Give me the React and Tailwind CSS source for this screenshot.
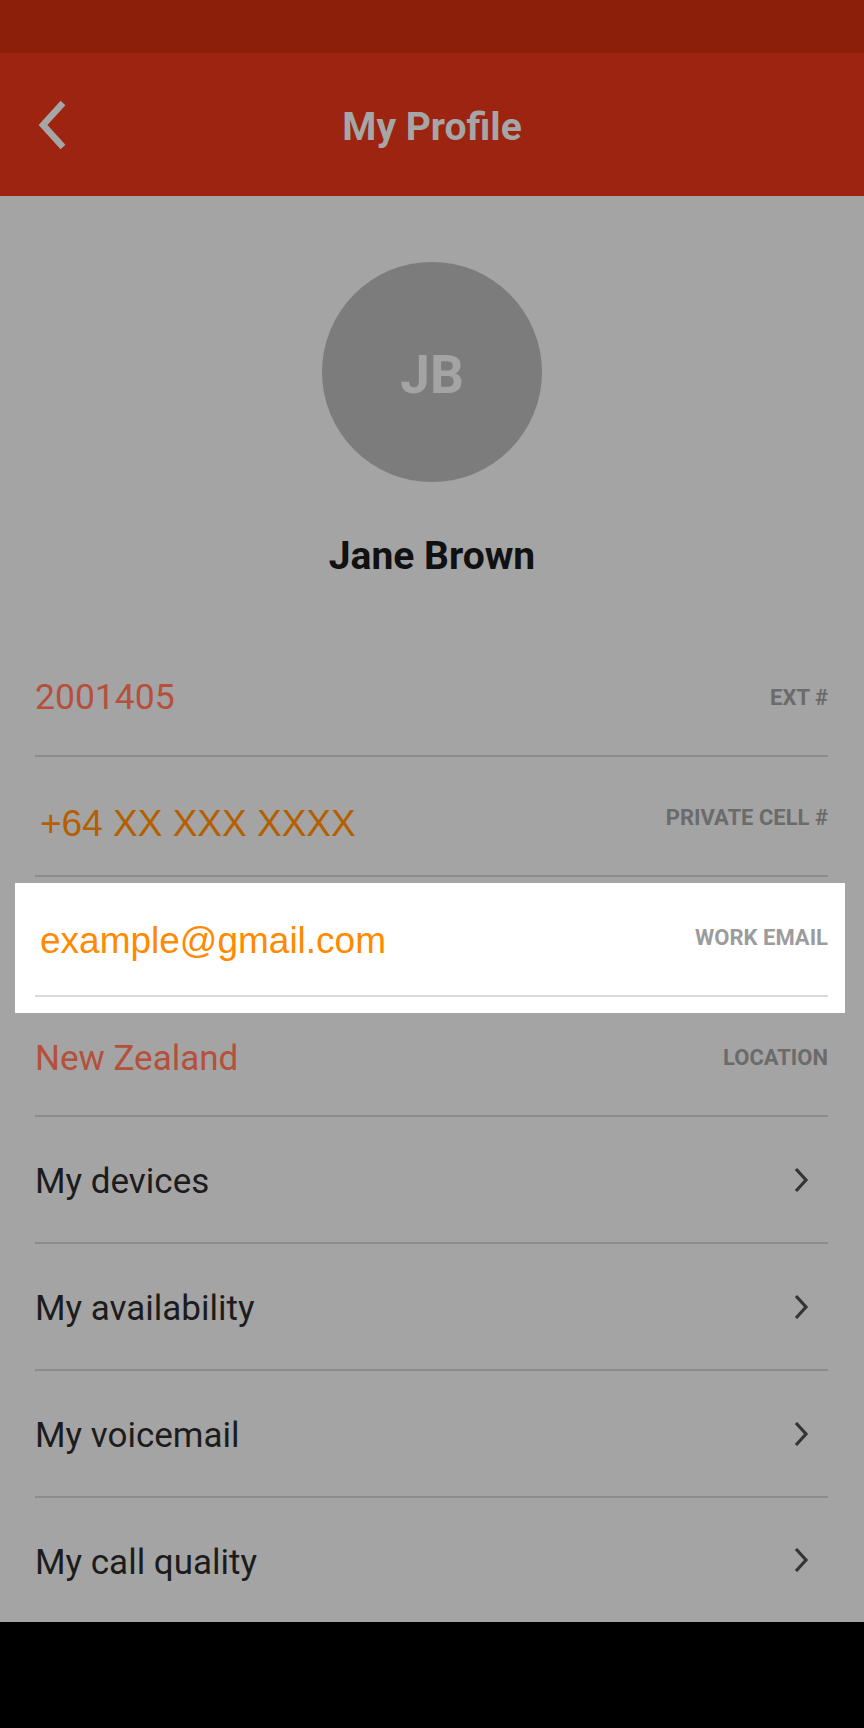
import React from "react";

function Chevron() {
  return (
    <svg width="20" height="30" viewBox="0 0 20 30" className="mr-[17px] shrink-0">
      <polyline points="5,4 15,15 5,26" fill="none" stroke="#343434" strokeWidth="3.2" strokeLinejoin="miter" />
    </svg>
  );
}

function InfoRow({ value, label, valueClass, labelClass = "text-[#6b6b6b]" }) {
  return (
    <div className="flex h-[120px] items-center justify-between border-b-2 border-[#8c8c8c]">
      <span className={valueClass}>{value}</span>
      <span className={"pt-[4px] font-[Roboto,sans-serif] text-[22px] font-bold leading-none " + labelClass}>{label}</span>
    </div>
  );
}

function MenuRow({ label, last }) {
  return (
    <div
      className={
        "flex items-center justify-between " +
        (last ? "h-[124px]" : "h-[127px] border-b-2 border-[#8c8c8c]")
      }
    >
      <span className="pt-[4px] font-[Roboto,sans-serif] text-[35px] leading-none text-[#1c1c1c]">{label}</span>
      <Chevron />
    </div>
  );
}

export default function App() {
  return (
    <div className="flex h-[1728px] w-[864px] flex-col overflow-hidden bg-black font-[Roboto,sans-serif]">
      <div className="h-[53px] shrink-0 bg-[#8b1f0a]" />
      <header className="grid h-[143px] shrink-0 grid-cols-[1fr_auto_1fr] items-center bg-[#9d2410]">
        <div className="pl-[36px]">
          <svg width="32" height="50" viewBox="0 0 32 50">
            <polyline points="27,3 7,25 27,47" fill="none" stroke="#a6a6a6" strokeWidth="6.5" strokeLinejoin="miter" />
          </svg>
        </div>
        <h1 className="pt-[6px] text-[39px] font-bold leading-none text-[#a6a6a6]">My Profile</h1>
        <div />
      </header>
      <main className="flex h-[1426px] shrink-0 flex-col bg-[#a4a4a4]">
        <div className="flex flex-col items-center pt-[66px]">
          <div className="flex h-[220px] w-[220px] items-center justify-center rounded-full bg-[#7c7c7c]">
            <span className="pt-[6px] text-[53px] font-bold leading-none text-[#a4a4a4]">JB</span>
          </div>
          <div className="mt-[52px] h-[44px] text-[39px] font-bold leading-[44px] text-[#111111]">Jane Brown</div>
        </div>
        <div className="mt-[59px] flex flex-col pl-[35px] pr-[36px]">
          <InfoRow
            value="2001405"
            label="EXT #"
            valueClass="pt-[4px] font-[Roboto,sans-serif] text-[35.5px] leading-none text-[#b5503b]"
          />
          <InfoRow
            value="+64 XX XXX XXXX"
            label="PRIVATE CELL #"
            valueClass="pl-[5px] pt-[15px] font-['Liberation_Sans',Arial,sans-serif] text-[37px] leading-none text-[#b45f00]"
          />
          <div className="relative">
            <div className="absolute top-[6px] -bottom-[16px] -left-[20px] -right-[17px] bg-white" />
            <div className="relative flex h-[118px] items-center justify-between">
              <span className="pl-[5px] pt-[9px] font-['Liberation_Sans',Arial,sans-serif] text-[37px] leading-none text-[#ff8a00]">
                example@gmail.com
              </span>
              <span className="pt-[4px] text-[22px] font-bold leading-none text-[#9c9c9c]">WORK EMAIL</span>
            </div>
            <div className="relative h-[2px] bg-[#d9d9d9]" />
          </div>
          <InfoRow
            value="New Zealand"
            label="LOCATION"
            valueClass="pt-[4px] font-[Roboto,sans-serif] text-[35px] leading-none text-[#b5503b]"
          />
          <MenuRow label="My devices" />
          <MenuRow label="My availability" />
          <MenuRow label="My voicemail" />
          <MenuRow label="My call quality" last />
        </div>
      </main>
      <div className="h-[106px] shrink-0 bg-black" />
    </div>
  );
}
